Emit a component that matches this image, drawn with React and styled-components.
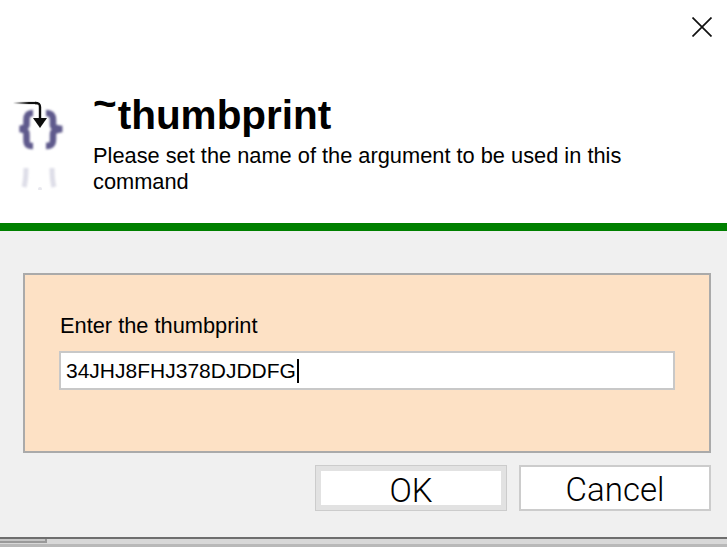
import React from 'react';
import styled, { createGlobalStyle } from 'styled-components';

const GlobalStyle = createGlobalStyle`
  html, body {
    margin: 0;
    padding: 0;
    background: #f0f0f0;
    overflow: hidden;
  }
  * {
    box-sizing: border-box;
  }
`;

const App = () => {
  return (
    <Dialog>
      <GlobalStyle />
      <Header>
        <CloseRow>
          <CloseIcon viewBox="0 0 20 20">
            <path d="M0.5 0.5 L19.5 19.5 M19.5 0.5 L0.5 19.5" stroke="#111" strokeWidth="1.7" fill="none" />
          </CloseIcon>
        </CloseRow>
        <HeaderBody>
          <LogoIcon viewBox="0 0 60 90">
            <defs>
              <filter id="soft" x="-20%" y="-20%" width="140%" height="140%">
                <feGaussianBlur stdDeviation="1.1" />
              </filter>
              <filter id="softer" x="-60%" y="-20%" width="220%" height="140%">
                <feGaussianBlur stdDeviation="1.3" />
              </filter>
              <filter id="line" x="-10%" y="-10%" width="120%" height="120%">
                <feGaussianBlur stdDeviation="0.4" />
              </filter>
              <linearGradient id="fade" gradientUnits="userSpaceOnUse" x1="0" y1="0" x2="16" y2="0">
                <stop offset="0" stopColor="#111" stopOpacity="0" />
                <stop offset="1" stopColor="#111" />
              </linearGradient>
            </defs>
            <g filter="url(#soft)" fill="none" stroke="#5f5a8c" strokeWidth="6.5">
              <path d="M20 13 C15 13 13.5 15 13.5 20 L13.5 25 C13.5 27 12 28 7 29 C12 30 13.5 31 13.5 34 L13.5 40 C13.5 45 15 46 20 46" />
              <path d="M33 13 C38 13 40 15 40 20 L40 25 C40 27 42 28 49 29 C42 30 40 31 40 34 L40 40 C40 45 38 46 33 46" />
            </g>
            <g filter="url(#softer)" fill="none" stroke="#dedee8" strokeWidth="5">
              <path d="M13 68 C13 74 13 80 11 87" />
              <path d="M39 68 C39 74 39 80 41 87" />
            </g>
            <circle cx="27" cy="89" r="2" fill="#e8e8ee" filter="url(#line)" />
            <path d="M0 3 H23" fill="none" stroke="url(#fade)" strokeWidth="2.2" />
            <g filter="url(#line)">
              <path d="M22 3 C26 3 27 4 27 7 V22" fill="none" stroke="#111" strokeWidth="2.4" />
              <path d="M20 18 H34 L27 28 Z" fill="#111" />
            </g>
          </LogoIcon>
          <HeaderText>
            <Title><Tilde>~</Tilde>thumbprint</Title>
            <Subtitle>Please set the name of the argument to be used in this command</Subtitle>
          </HeaderText>
        </HeaderBody>
      </Header>
      <GreenRule />
      <Body>
        <Panel>
          <FieldLabel>Enter the thumbprint</FieldLabel>
          <InputBox>
            34JHJ8FHJ378DJDDFG
            <Caret />
          </InputBox>
        </Panel>
        <Buttons>
          <Button $focused>OK</Button>
          <Button>Cancel</Button>
        </Buttons>
      </Body>
      <BottomEdge>
        <BottomTab />
      </BottomEdge>
    </Dialog>
  );
};

const Dialog = styled.div`
  width: 727px;
  height: 547px;
  display: flex;
  flex-direction: column;
  background: #f0f0f0;
  font-family: "Liberation Sans", Arial, sans-serif;
  color: #000;
  overflow: hidden;
`;

const Header = styled.div`
  height: 223px;
  background: #fff;
  padding-top: 17px;
`;

const CloseRow = styled.div`
  display: flex;
  justify-content: flex-end;
  padding-right: 15px;
  height: 20px;
`;

const CloseIcon = styled.svg`
  width: 20px;
  height: 20px;
`;

const HeaderBody = styled.div`
  display: flex;
  margin-top: 55px;
  padding-left: 13px;
`;

const LogoIcon = styled.svg`
  width: 60px;
  height: 90px;
  margin-top: 8px;
  flex: none;
`;

const HeaderText = styled.div`
  margin-left: 20px;
  width: 560px;
`;

const Title = styled.div`
  font-size: 40.5px;
  font-weight: bold;
  line-height: 48px;
  height: 48px;
  margin-top: -1px;
`;

const Tilde = styled.span`
  display: inline-block;
  line-height: 0;
  margin-right: 1px;
  transform: translateY(-12px);
`;

const Subtitle = styled.div`
  font-size: 21.8px;
  line-height: 26px;
  margin-top: 4px;
`;

const GreenRule = styled.div`
  height: 8px;
  background: #008000;
`;

const Body = styled.div`
  flex: 1;
  padding: 42px 16px 0 23px;
`;

const Panel = styled.div`
  height: 180px;
  background: #fde1c5;
  border: 2px solid #aaa;
  padding: 38px 34px 0 34px;
`;

const FieldLabel = styled.div`
  font-size: 21.8px;
  line-height: 26px;
  margin-left: 1px;
`;

const InputBox = styled.div`
  display: flex;
  align-items: center;
  height: 39px;
  margin-top: 12px;
  padding-left: 5px;
  background: #fff;
  border: 2px solid #c8c8c8;
  font-size: 21px;
`;

const Caret = styled.span`
  width: 2px;
  height: 24px;
  margin-left: 1px;
  background: #000;
`;

const Buttons = styled.div`
  display: flex;
  justify-content: flex-end;
  gap: 12px;
  margin-top: 12px;
`;

const Button = styled.button`
  width: 192px;
  height: 46px;
  padding: ${({ $focused }) => ($focused ? '0' : '3px 0 0')};
  background: #fff;
  border: ${({ $focused }) => ($focused ? '6px solid #e2e2e2' : '2px solid #ccc')};
  outline: ${({ $focused }) => ($focused ? '1px solid #ccc' : 'none')};
  outline-offset: -1px;
  border-radius: 0;
  font-family: Roboto, "Liberation Sans", Arial, sans-serif;
  font-size: 33px;
  font-weight: 300;
  color: #000;
`;

const BottomEdge = styled.div`
  height: 10px;
  border-top: 2px solid #6e6e6e;
  background: linear-gradient(#d8d8d8 0, #d8d8d8 5px, #b9b9b9 5px);
`;

const BottomTab = styled.div`
  width: 47px;
  height: 4px;
  background: #c6c6c6;
  border-right: 2px solid #9a9a9a;
  border-bottom: 2px solid #9a9a9a;
`;

export default App;
